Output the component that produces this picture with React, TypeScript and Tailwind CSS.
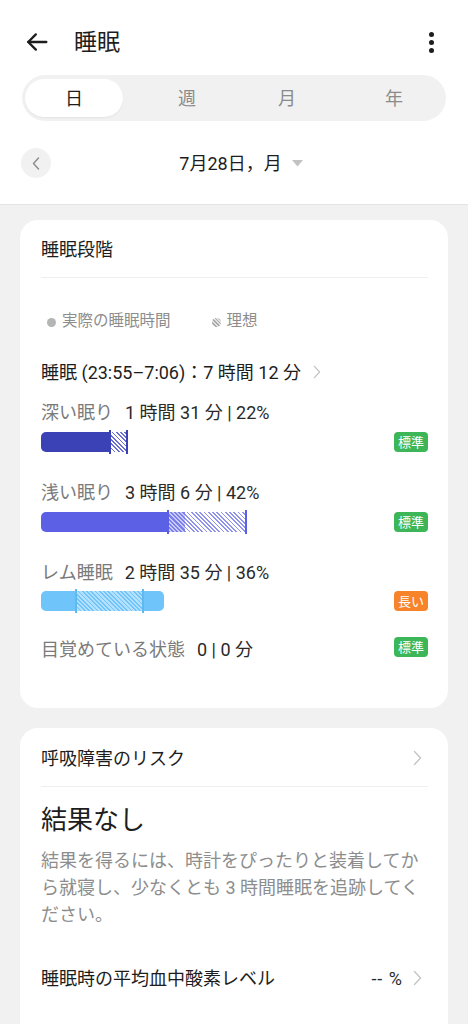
import React from "react";

const Chevron = ({ className = "" }: { className?: string }) => (
  <svg width="9" height="16" viewBox="0 0 9 16" className={className} fill="none">
    <polyline points="1.5,1.5 7.5,8 1.5,14.5" stroke="#c4c4c4" strokeWidth="1.4" strokeLinecap="round" strokeLinejoin="round" />
  </svg>
);

const Badge = ({ text, color }: { text: string; color: "green" | "orange" }) => (
  <div
    className={
      "flex h-[20px] w-[34px] items-center justify-center rounded-[4px] text-[13px] leading-none text-white " +
      (color === "green" ? "bg-[#3db657]" : "bg-[#f7842b]")
    }
  >
    {text}
  </div>
);

export default function App() {
  return (
    <div className="min-h-[1024px] w-[468px] overflow-hidden bg-[#f1f1f1] font-['Roboto','Noto_Sans_CJK_JP',sans-serif] text-[#1d1d1d]">
      {/* Header */}
      <div className="border-b border-[#e4e4e4] bg-white pt-[20px] pb-[26px]">
        <div className="flex h-[44px] items-center pl-[23px] pr-[34px]">
          <svg width="28" height="28" viewBox="0 0 24 24" fill="none" stroke="#1d1d1d" strokeWidth="2" strokeLinecap="round" strokeLinejoin="round">
            <path d="M20 12H4.5" />
            <path d="M11 5.5 4.5 12 11 18.5" />
          </svg>
          <div className="ml-[23px] text-[23px] leading-none text-[#1d1d1d]">睡眠</div>
          <div className="ml-auto flex flex-col items-center gap-[3px]">
            <span className="block h-[5px] w-[5px] rounded-full bg-[#1d1d1d]" />
            <span className="block h-[5px] w-[5px] rounded-full bg-[#1d1d1d]" />
            <span className="block h-[5px] w-[5px] rounded-full bg-[#1d1d1d]" />
          </div>
        </div>
        <div className="mx-[22px] mt-[11px] flex h-[46px] items-center rounded-full bg-[#f1f1f1] p-[3px] text-[18px]">
          <div className="flex h-[38px] w-[98px] items-center justify-center rounded-full bg-white text-[#1d1d1d] shadow-[0_1px_2px_rgba(0,0,0,0.06)]">日</div>
          <div className="flex w-[128px] items-center justify-center text-[#8a8a8a]">週</div>
          <div className="flex w-[72px] items-center justify-center text-[#8a8a8a]">月</div>
          <div className="flex flex-1 items-center justify-center pl-[22px] text-[#8a8a8a]">年</div>
        </div>
        <div className="relative mt-[27px] flex h-[30px] items-center justify-center">
          <div className="absolute left-[21px] top-0 flex h-[30px] w-[30px] items-center justify-center rounded-full bg-[#f1f1f1]">
            <svg width="8" height="13" viewBox="0 0 8 13" fill="none">
              <polyline points="6.5,1 1.5,6.5 6.5,12" stroke="#8a8a8a" strokeWidth="1.4" strokeLinecap="round" strokeLinejoin="round" />
            </svg>
          </div>
          <div className="ml-[14px] text-[18px] text-[#1d1d1d]">7月28日，月</div>
          <svg width="11" height="7" viewBox="0 0 11 7" className="ml-[10px]">
            <polygon points="0,0 11,0 5.5,6.5" fill="#c2c2c2" />
          </svg>
        </div>
      </div>

      {/* Card 1 */}
      <div className="mx-[20px] mt-[15px] rounded-[18px] bg-white pb-[47px] pl-[21px] pr-[20px] pt-[18px]">
        <div className="text-[18px] leading-[24px] text-[#1d1d1d]">睡眠段階</div>
        <div className="mt-[15px] h-px bg-[#efefef]" />
        <div className="mt-[34px] flex h-[20px] items-center text-[15.5px] text-[#8d8d8d]">
          <span className="ml-[6px] block h-[9px] w-[9px] rounded-full bg-[#b5b5b5]" />
          <span className="ml-[6px]">実際の睡眠時間</span>
          <span className="ml-[41px] block h-[9px] w-[9px] rounded-full bg-[repeating-linear-gradient(45deg,#a9a9a9_0px,#a9a9a9_1.2px,#e2e2e2_1.2px,#e2e2e2_2.6px)]" />
          <span className="ml-[6px]">理想</span>
        </div>
        <div className="mt-[28px] flex h-[24px] items-center text-[18px] text-[#1d1d1d]">
          <span>睡眠 (23:55–7:06)：7 時間 12 分</span>
          <Chevron className="ml-[12px] h-[14px] w-[8px]" />
        </div>

        {/* Deep */}
        <div className="mt-[16px] flex h-[24px] items-center text-[18px]">
          <span className="text-[#7a7a7a]">深い眠り</span>
          <span className="ml-[12px] text-[#2a2a2a]">1 時間 31 分 | 22%</span>
        </div>
        <div className="mt-[8px] flex items-center justify-between">
          <div className="relative flex h-[20px]">
            <div className="h-full w-[69px] rounded-l-[5px] bg-[#3b42b5]" />
            <div className="h-full w-[17px] bg-[repeating-linear-gradient(45deg,#6a70d0_0px,#6a70d0_1.2px,#ffffff_1.2px,#ffffff_3px)]" />
            <div className="absolute left-[68px] top-[-2px] h-[24px] w-[2px] bg-[#3b42b5]" />
            <div className="absolute left-[85px] top-[-2px] h-[24px] w-[2px] bg-[#3b42b5]" />
          </div>
          <Badge text="標準" color="green" />
        </div>

        {/* Light */}
        <div className="mt-[28px] flex h-[24px] items-center text-[18px]">
          <span className="text-[#7a7a7a]">浅い眠り</span>
          <span className="ml-[12px] text-[#2a2a2a]">3 時間 6 分 | 42%</span>
        </div>
        <div className="mt-[8px] flex items-center justify-between">
          <div className="relative flex h-[20px]">
            <div className="h-full w-[127px] rounded-l-[5px] bg-[#5b60e4]" />
            <div className="h-full w-[17px] bg-[repeating-linear-gradient(45deg,#7a7fe9_0px,#7a7fe9_1.5px,#c9cbf6_1.5px,#c9cbf6_3px)]" />
            <div className="h-full w-[61px] bg-[repeating-linear-gradient(45deg,#8f93ec_0px,#8f93ec_1.2px,#ffffff_1.2px,#ffffff_3px)]" />
            <div className="absolute left-[126px] top-[-2px] h-[24px] w-[2px] bg-[#5b60e4]" />
            <div className="absolute left-[204px] top-[-2px] h-[24px] w-[2px] bg-[#5b60e4]" />
          </div>
          <Badge text="標準" color="green" />
        </div>

        {/* REM */}
        <div className="mt-[28px] flex h-[24px] items-center text-[18px]">
          <span className="text-[#7a7a7a]">レム睡眠</span>
          <span className="ml-[12px] text-[#2a2a2a]">2 時間 35 分 | 36%</span>
        </div>
        <div className="mt-[7px] flex items-center justify-between">
          <div className="relative flex h-[20px] w-[123px] overflow-visible">
            <div className="h-full w-[35px] rounded-l-[5px] bg-[#6fc4f9]" />
            <div className="h-full w-[67px] bg-[repeating-linear-gradient(45deg,#6fc4f9_0px,#6fc4f9_1.2px,#b3e0fc_1.2px,#b3e0fc_3px)]" />
            <div className="h-full w-[21px] rounded-r-[5px] bg-[#6fc4f9]" />
            <div className="absolute left-[34px] top-[-2px] h-[24px] w-[2px] bg-[#5fb8f2]" />
            <div className="absolute left-[101px] top-[-2px] h-[24px] w-[2px] bg-[#5fb8f2]" />
          </div>
          <Badge text="長い" color="orange" />
        </div>

        {/* Awake */}
        <div className="mt-[26px] flex h-[24px] items-center justify-between text-[18px]">
          <div>
            <span className="text-[#7a7a7a]">目覚めている状態</span>
            <span className="ml-[12px] text-[#2a2a2a]">0 | 0 分</span>
          </div>
          <div className="-mt-[4px]">
            <Badge text="標準" color="green" />
          </div>
        </div>
      </div>

      {/* Card 2 */}
      <div className="mx-[20px] mt-[20px] rounded-t-[18px] bg-white pb-[40px] pl-[21px] pr-[20px] pt-[18px]">
        <div className="flex h-[24px] items-center justify-between text-[18px] text-[#1d1d1d]">
          <span>呼吸障害のリスク</span>
          <Chevron className="mr-[6px]" />
        </div>
        <div className="mt-[16px] h-px bg-[#efefef]" />
        <div className="mt-[16px] text-[26px] leading-[34px] text-[#1d1d1d]">結果なし</div>
        <div className="mt-[10px] pr-[4px] text-[18px] leading-[27px] text-[#8d8d8d]">
          結果を得るには、時計をぴったりと装着してから就寝し、少なくとも 3 時間睡眠を追跡してください。
        </div>
        <div className="mt-[38px] flex h-[24px] items-center text-[18px] text-[#1d1d1d]">
          <span>睡眠時の平均血中酸素レベル</span>
          <span className="ml-auto tracking-[1px] text-[#2a2a2a]">-- %</span>
          <Chevron className="ml-[10px] mr-[6px]" />
        </div>
      </div>
    </div>
  );
}
